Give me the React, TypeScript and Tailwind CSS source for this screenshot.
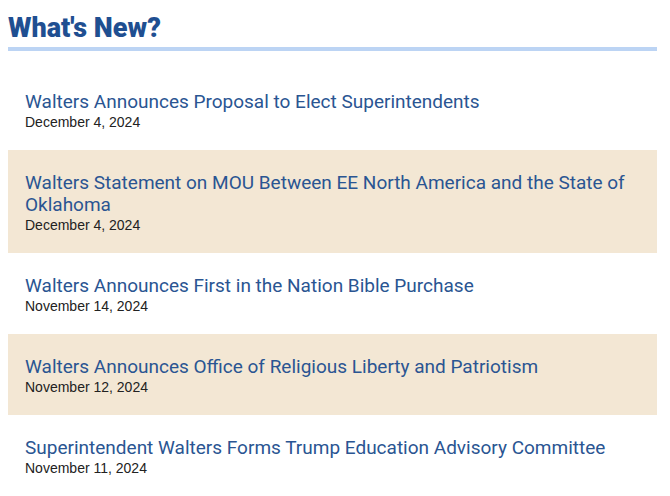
const items = [
  { title: "Walters Announces Proposal to Elect Superintendents", date: "December 4, 2024" },
  { title: "Walters Statement on MOU Between EE North America and the State of Oklahoma", date: "December 4, 2024" },
  { title: "Walters Announces First in the Nation Bible Purchase", date: "November 14, 2024" },
  { title: "Walters Announces Office of Religious Liberty and Patriotism", date: "November 12, 2024" },
  { title: "Superintendent Walters Forms Trump Education Advisory Committee", date: "November 11, 2024" },
];

export default function App() {
  return (
    <div className="w-[670px] h-[496px] overflow-hidden bg-white px-2">
      <h2 className="pt-[13px] pb-[4px] text-[27px] leading-[30px] font-black text-[#1f4f91] font-['Roboto',sans-serif] w-[649px]">
        What's New?
      </h2>
      <div className="h-1 w-[649px] bg-[#bcd4f4]" />

      <ul className="mt-[18px] w-[649px]">
        {items.map((item, i) => (
          <li
            key={i}
            className={`pl-[17px] pr-4 pt-[22px] pb-[19px] ${i % 2 === 1 ? "bg-[#f3e7d4]" : ""}`}
          >
            <a className="block text-[19px] leading-[22px] text-[#2a5592] font-['Roboto',sans-serif]">
              {item.title}
            </a>
            <div className="text-[14px] leading-[18px] text-[#222] font-['Liberation_Sans',Arial,sans-serif]">
              {item.date}
            </div>
          </li>
        ))}
      </ul>
    </div>
  );
}
